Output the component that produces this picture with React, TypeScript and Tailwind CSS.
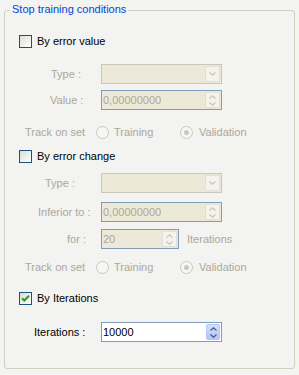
import React from "react";

const font = { fontFamily: '"Liberation Sans", Arial, sans-serif' };

function CheckBox({ checked = false }: { checked?: boolean }) {
  return (
    <div className="flex h-[13px] w-[13px] shrink-0 items-center justify-center border border-[#1c5180] bg-linear-to-br from-[#dcdcd7] to-white">
      {checked && (
        <svg width="11" height="11" viewBox="0 0 11 11">
          <path d="M2 5.2 L4.3 7.5 L9 2.8" stroke="#21a121" strokeWidth="2" fill="none" />
        </svg>
      )}
    </div>
  );
}

function Radio({ checked = false }: { checked?: boolean }) {
  return (
    <div className="flex h-[13px] w-[13px] shrink-0 items-center justify-center rounded-full border border-[#cac8bb] bg-[#f7f6f2]">
      {checked && <div className="h-[5px] w-[5px] rounded-full bg-[#cac8bb]" />}
    </div>
  );
}

function Arrow({ up, color }: { up?: boolean; color: string }) {
  return (
    <svg width="7" height="4" viewBox="0 0 7 4">
      <path d={up ? "M0.5 3.5 L3.5 0.8 L6.5 3.5" : "M0.5 0.5 L3.5 3.2 L6.5 0.5"} stroke={color} strokeWidth="1.3" fill="none" />
    </svg>
  );
}

function Combo() {
  return (
    <div className="flex h-[20px] w-[121px] border border-[#c9c7ba] bg-[#ece9d8] p-[1px]">
      <div className="flex-1" />
      <div className="flex w-[15px] items-center justify-center border border-[#e2e0d6] bg-[#f4f3ee]">
        <Arrow color="#c9c7ba" />
      </div>
    </div>
  );
}

function Spin({ value, w, enabled = false }: { value: string; w: string; enabled?: boolean }) {
  return (
    <div className={`flex h-[20px] ${w} border border-[#7f9db9] p-[1px] ${enabled ? "bg-white" : "bg-[#ece9d8]"}`}>
      <div className={`flex-1 leading-[16px] ${enabled ? "text-black" : "text-[#aca899]"}`}>{value}</div>
      {enabled ? (
        <div className="flex w-[14px] flex-col rounded-[2px] border border-[#b3c6f5] bg-linear-to-b from-[#d4e0fb] to-[#b2c5f5]">
          <div className="flex flex-1 items-center justify-center">
            <Arrow up color="#4d6185" />
          </div>
          <div className="flex flex-1 items-center justify-center">
            <Arrow color="#4d6185" />
          </div>
        </div>
      ) : (
        <div className="flex w-[15px] flex-col border border-[#e2e0d6] bg-[#f4f3ee]">
          <div className="flex flex-1 items-center justify-center">
            <Arrow up color="#c9c7ba" />
          </div>
          <div className="flex flex-1 items-center justify-center">
            <Arrow color="#c9c7ba" />
          </div>
        </div>
      )}
    </div>
  );
}

function FieldRow({ label, pad, enabled = false, children, className }: { label: string; pad: string; enabled?: boolean; children: React.ReactNode; className: string }) {
  return (
    <div className={`flex h-[20px] items-center ${className}`}>
      <div className={`w-[96px] shrink-0 ${pad} ${enabled ? "text-black" : "text-[#aca899]"}`}>{label}</div>
      {children}
    </div>
  );
}

function TrackRow({ className }: { className: string }) {
  return (
    <div className={`flex h-[14px] items-center pl-[20px] text-[#aca899] ${className}`}>
      <div className="w-[71px] shrink-0">Track on set</div>
      <div className="flex w-[84px] shrink-0 items-center gap-[5px]">
        <Radio />
        <span>Training</span>
      </div>
      <div className="flex items-center gap-[6px]">
        <Radio checked />
        <span>Validation</span>
      </div>
    </div>
  );
}

export default function App() {
  return (
    <div className="h-[375px] w-[299px] bg-[#f3f3f1] pl-[4px] pt-[10px] text-[11px] leading-[13px]" style={font}>
      <div className="relative flex h-[359px] w-[291px] flex-col rounded-[3px] border border-[#d0d0bf]">
        <span className="absolute left-[5px] top-[-8px] bg-[#f3f3f1] px-[2px] text-[#0046d5]">Stop training conditions</span>

        <div className="mt-[24px] flex h-[13px] items-center gap-[5px] pl-[14px]">
          <CheckBox />
          <span>By error value</span>
        </div>
        <FieldRow label="Type :" pad="pl-[46px]" className="mt-[16px]">
          <Combo />
        </FieldRow>
        <FieldRow label="Value :" pad="pl-[45px]" className="mt-[6px]">
          <Spin value="0,00000000" w="w-[121px]" />
        </FieldRow>
        <TrackRow className="mt-[15px]" />

        <div className="mt-[11px] flex h-[13px] items-center gap-[5px] pl-[14px]">
          <CheckBox />
          <span>By error change</span>
        </div>
        <FieldRow label="Type :" pad="pl-[40px]" className="mt-[10px]">
          <Combo />
        </FieldRow>
        <FieldRow label="Inferior to :" pad="pl-[33px]" className="mt-[9px]">
          <Spin value="0,00000000" w="w-[121px]" />
        </FieldRow>
        <FieldRow label="for :" pad="pl-[62px]" className="mt-[7px]">
          <Spin value="20" w="w-[78px]" />
          <span className="ml-[8px] text-[#aca899]">Iterations</span>
        </FieldRow>
        <TrackRow className="mt-[11px]" />

        <div className="mt-[18px] flex h-[13px] items-center gap-[5px] pl-[14px]">
          <CheckBox checked />
          <span>By Iterations</span>
        </div>
        <FieldRow label="Iterations :" pad="pl-[29px]" enabled className="mt-[17px]">
          <Spin value="10000" w="w-[121px]" enabled />
        </FieldRow>
      </div>
    </div>
  );
}
